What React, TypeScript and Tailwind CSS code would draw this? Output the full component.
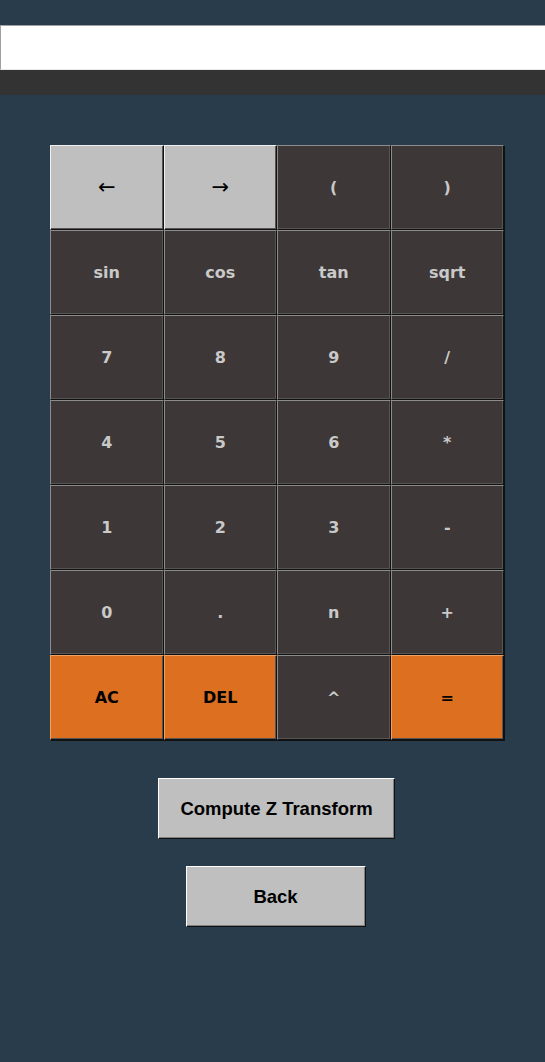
const keys: { label: string; tone: 'light' | 'dark' | 'orange' }[] = [
  { label: '←', tone: 'light' },
  { label: '→', tone: 'light' },
  { label: '(', tone: 'dark' },
  { label: ')', tone: 'dark' },
  { label: 'sin', tone: 'dark' },
  { label: 'cos', tone: 'dark' },
  { label: 'tan', tone: 'dark' },
  { label: 'sqrt', tone: 'dark' },
  { label: '7', tone: 'dark' },
  { label: '8', tone: 'dark' },
  { label: '9', tone: 'dark' },
  { label: '/', tone: 'dark' },
  { label: '4', tone: 'dark' },
  { label: '5', tone: 'dark' },
  { label: '6', tone: 'dark' },
  { label: '*', tone: 'dark' },
  { label: '1', tone: 'dark' },
  { label: '2', tone: 'dark' },
  { label: '3', tone: 'dark' },
  { label: '-', tone: 'dark' },
  { label: '0', tone: 'dark' },
  { label: '.', tone: 'dark' },
  { label: 'n', tone: 'dark' },
  { label: '+', tone: 'dark' },
  { label: 'AC', tone: 'orange' },
  { label: 'DEL', tone: 'orange' },
  { label: '^', tone: 'dark' },
  { label: '=', tone: 'orange' },
]

const toneClass = {
  light: "bg-[#bfbfbf] text-black border-t-[#f0f0f0] border-l-[#f0f0f0] font-normal text-[21px] font-['DejaVu_Sans',sans-serif]",
  dark: "bg-[#3d3737] text-[#c9c9c9] border-t-[#8c8c8c] border-l-[#8c8c8c] font-bold text-[16px] font-['DejaVu_Sans',sans-serif]",
  orange: "bg-[#dc6f20] text-black border-t-[#f0a060] border-l-[#f0a060] font-bold text-[16px] font-['DejaVu_Sans',sans-serif]",
}

export default function App() {
  return (
    <div className="min-h-[1062px] w-full overflow-hidden bg-[#293c4b] pt-[25px]">
      {/* 입력창 */}
      <input
        type="text"
        className="block h-[45px] w-full border-l border-t border-l-[#a0a0a0] border-t-[#a0a0a0] border-b border-b-[#e8e8e8] bg-white px-2 font-['DejaVu_Sans',sans-serif] text-lg outline-none"
      />
      <div className="h-[25px] w-full bg-[#333333]" />

      {/* 키패드 */}
      <div className="ml-[50px] mt-[50px] grid w-[454px] grid-cols-4 shadow-[1px_1px_0_#111]">
        {keys.map((k) => (
          <button
            key={k.label}
            className={`flex h-[85px] items-center justify-center border border-b-[#111] border-r-[#111] shadow-[inset_-1px_-1px_0_#555] ${toneClass[k.tone]}`}
          >
            {k.label}
          </button>
        ))}
      </div>

      {/* 하단 버튼 */}
      <div className="mt-[38px] flex flex-col items-center gap-[27px]">
        <button className="ml-[8px] h-[61px] w-[237px] border border-l-white border-t-white border-b-[#111] border-r-[#111] bg-[#bfbfbf] font-['Liberation_Sans',Arial,sans-serif] text-[18.5px] font-bold text-black shadow-[inset_-1px_-1px_0_#808080]">
          Compute Z Transform
        </button>
        <button className="ml-[6px] h-[61px] w-[180px] border border-l-white border-t-white border-b-[#111] border-r-[#111] bg-[#bfbfbf] font-['Liberation_Sans',Arial,sans-serif] text-[18.5px] font-bold text-black shadow-[inset_-1px_-1px_0_#808080]">
          Back
        </button>
      </div>
    </div>
  )
}
